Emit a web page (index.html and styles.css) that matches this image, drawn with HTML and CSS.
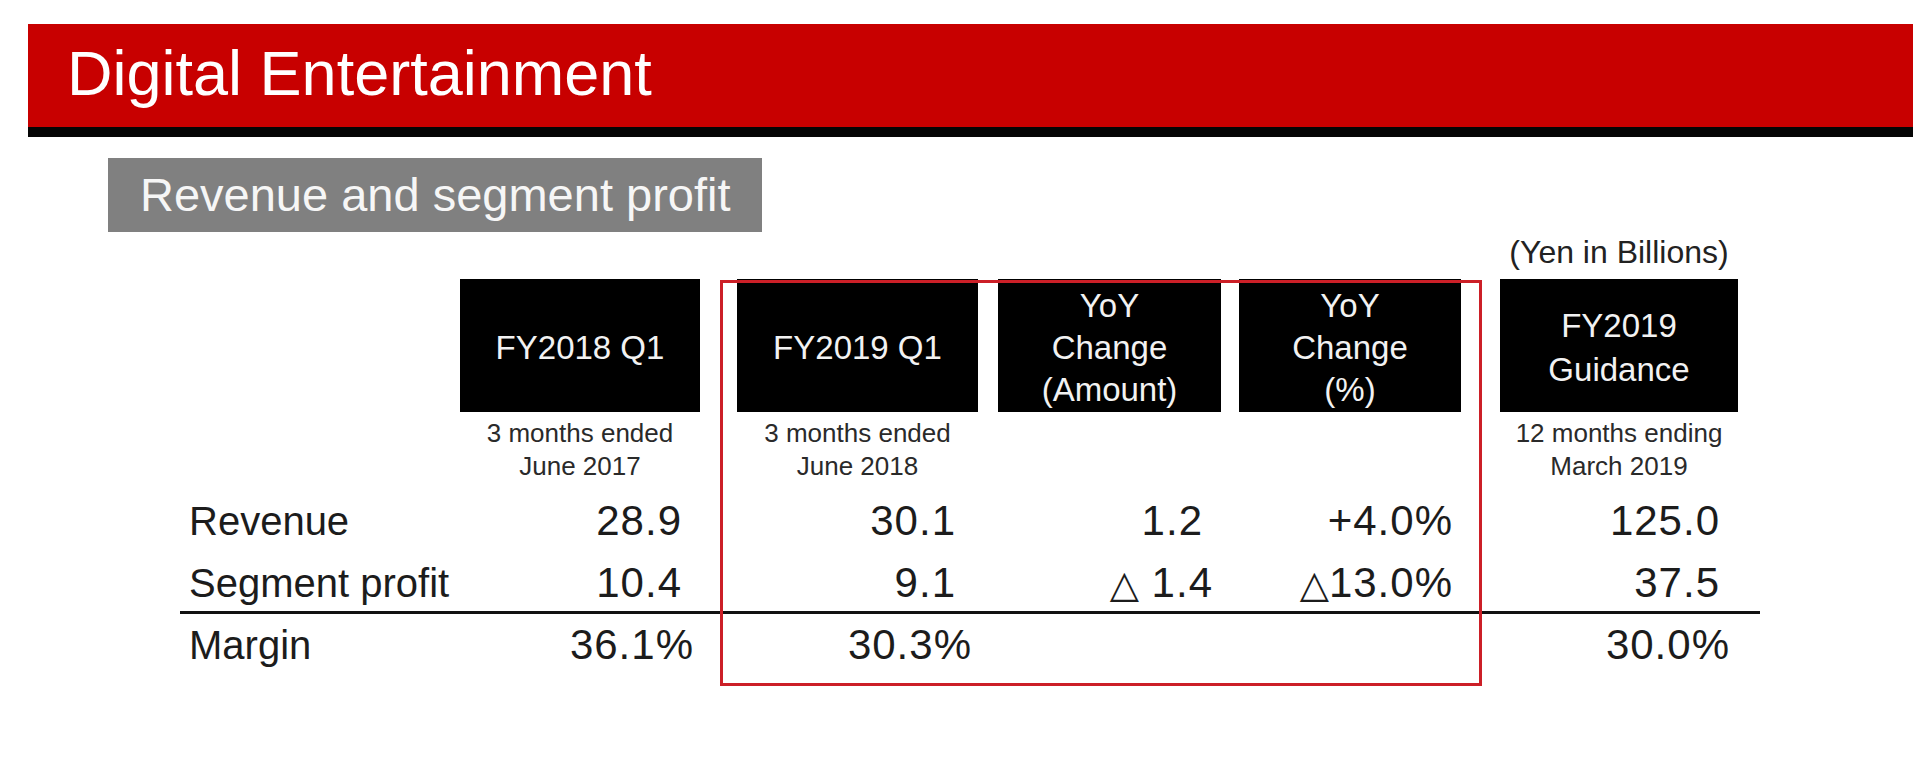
FILE: index.html
```html
<!DOCTYPE html>
<html lang="en">
<head>
<meta charset="utf-8">
<title>Digital Entertainment</title>
<link rel="stylesheet" href="styles.css">
</head>
<body>
<div class="banner">Digital Entertainment</div>
<div class="subtitle">Revenue and segment profit</div>

<div class="table">
  <div class="head">
    <div class="caption">(Yen in Billions)</div>
    <div class="hbox b1">FY2018 Q1</div>
    <div class="hbox b2">FY2019 Q1</div>
    <div class="hbox b3">YoY<br>Change<br>(Amount)</div>
    <div class="hbox b4">YoY<br>Change<br>(%)</div>
    <div class="hbox b5 tall">FY2019<br>Guidance</div>
    <div class="note b1">3 months ended<br>June 2017</div>
    <div class="note b2">3 months ended<br>June 2018</div>
    <div class="note b5">12 months ending<br>March 2019</div>
  </div>

  <div class="row first">
    <div class="label">Revenue</div>
    <div class="num">28.9</div>
    <div class="num">30.1</div>
    <div class="num">1.2</div>
    <div class="num">+4.0%</div>
    <div class="num">125.0</div>
  </div>
  <div class="row">
    <div class="label">Segment profit</div>
    <div class="num">10.4</div>
    <div class="num">9.1</div>
    <div class="num d3"><span class="tri">△</span> 1.4</div>
    <div class="num"><span class="tri">△</span>13.0%</div>
    <div class="num">37.5</div>
  </div>
  <div class="row total">
    <div class="label">Margin</div>
    <div class="num s1">36.1%</div>
    <div class="num s2">30.3%</div>
    <div class="num"></div>
    <div class="num"></div>
    <div class="num s5">30.0%</div>
  </div>

  <div class="highlight"></div>
</div>
</body>
</html>
```

FILE: styles.css
```css
html, body {
  margin: 0;
  padding: 0;
  background: #ffffff;
}

body {
  width: 1920px;
  height: 776px;
  overflow: hidden;
  font-family: "Liberation Sans", Arial, "DejaVu Sans", sans-serif;
  color: #1c1c1c;
}

.banner {
  box-sizing: border-box;
  margin: 24px 7px 0 28px;
  height: 113px;
  padding: 18px 0 0 39px;
  background: #c80000;
  border-bottom: 10px solid #050505;
  color: #ffffff;
  font-size: 63px;
  line-height: 63px;
}

.subtitle {
  box-sizing: border-box;
  margin: 21px 0 0 108px;
  width: 654px;
  height: 74px;
  padding-left: 32px;
  background: #808080;
  color: #f6f6f6;
  font-size: 47px;
  line-height: 74px;
}

.table {
  position: relative;
  margin: 4px 0 0 177px;
  width: 1583px;
}

.head {
  display: grid;
  grid-template-columns: 283px 240px 37px 241px 20px 223px 18px 222px 39px 238px;
  grid-template-rows: auto auto auto;
}

.caption {
  grid-column: 10;
  grid-row: 1;
  text-align: center;
  font-size: 32px;
  line-height: 32px;
  color: #222;
  white-space: nowrap;
}

.hbox {
  box-sizing: border-box;
  grid-row: 2;
  margin-top: 11px;
  height: 133px;
  padding-top: 4px;
  background: #000;
  color: #f2f2f2;
  font-size: 33px;
  line-height: 42px;
  display: flex;
  align-items: center;
  justify-content: center;
  text-align: center;
}

.hbox.tall {
  line-height: 44px;
}

.b1 { grid-column: 2; }
.b2 { grid-column: 4; }
.b3 { grid-column: 6; }
.b4 { grid-column: 8; }
.b5 { grid-column: 10; }

.note {
  grid-row: 3;
  margin-top: 5px;
  text-align: center;
  font-size: 26px;
  line-height: 33px;
  color: #2a2a2a;
  white-space: nowrap;
}

.row {
  display: grid;
  grid-template-columns: 323px 181px 274px 247px 250px 267px 41px;
  height: 62px;
  line-height: 62px;
}

.row.first {
  margin-top: 7px;
}

.label {
  padding-left: 12px;
  font-size: 40px;
  white-space: nowrap;
}

.num {
  text-align: right;
  font-size: 42px;
  letter-spacing: 1px;
  margin-right: -1px;
  white-space: nowrap;
}

.num.d3 { margin-right: -11px; }
.num.s1 { margin-right: -13px; }
.num.s2 { margin-right: -17px; }
.num.s5 { margin-right: -11px; }

.tri {
  font-family: "DejaVu Sans", sans-serif;
  font-size: 38px;
  letter-spacing: 0;
}

.row.total {
  margin-top: -3px;
  margin-left: 3px;
  border-top: 3px solid #111;
  height: 62px;
  line-height: 62px;
  grid-template-columns: 320px 181px 274px 247px 250px 267px 41px;
}

.row.total .label {
  padding-left: 9px;
}

.highlight {
  position: absolute;
  left: 543px;
  top: 44px;
  width: 762px;
  height: 406px;
  box-sizing: border-box;
  border: 3px solid #cc1f27;
  pointer-events: none;
}
```
